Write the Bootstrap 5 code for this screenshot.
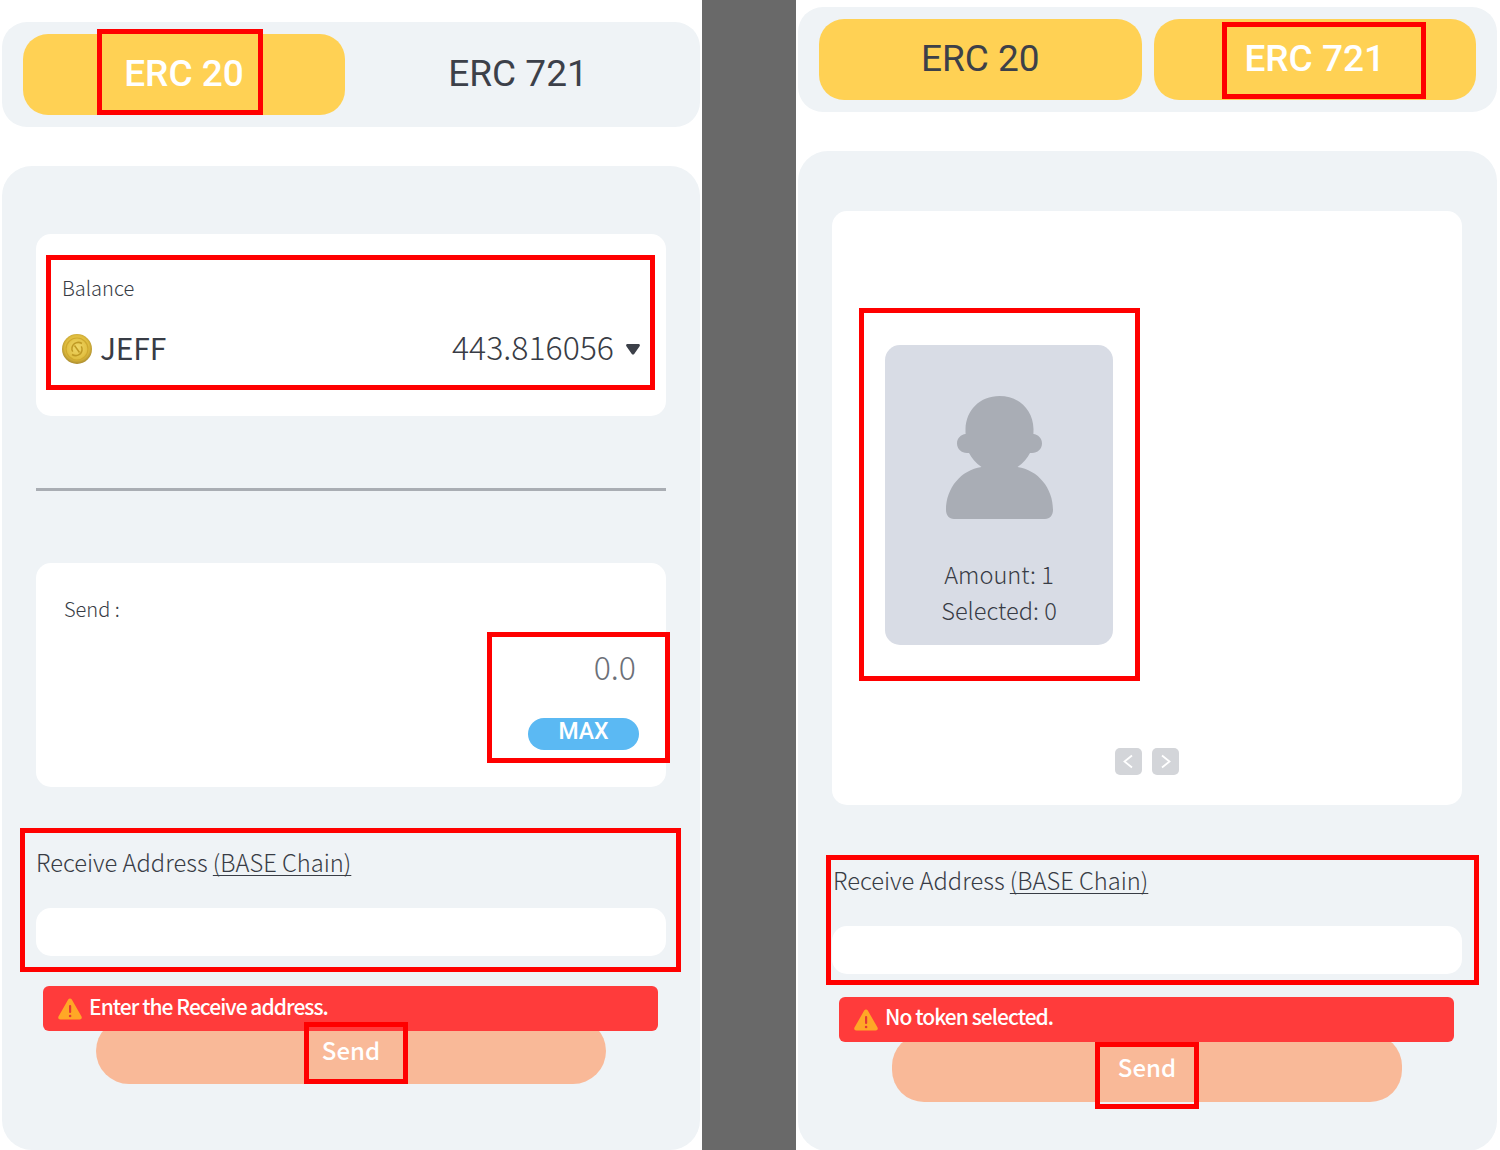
<!DOCTYPE html>
<html lang="en">
<head>
<meta charset="utf-8">
<title>Send tokens</title>
<link href="https://cdn.jsdelivr.net/npm/bootstrap@5.3.0/dist/css/bootstrap.min.css" rel="stylesheet">
<style>
html,body{height:1150px;overflow:hidden;background:#fff}
body{font-family:"Noto Sans CJK KR","Noto Sans",sans-serif;font-weight:300;color:#383c45;position:relative}
.stage{height:1150px;width:1500px}
.pane-l{width:702px;padding:22px 0 0 2px;flex:none}
.pane-gap{width:94px;background:#696969;flex:none}
.pane-r{width:704px;padding:7px 3px 0 2px;flex:none}
.tabbar{height:105px;background:#eff3f6;border-radius:25px;padding:12px 21px;margin-right:2px;gap:12px}
.tabbar-r{margin-right:0}
.tabitem{flex:1 1 0;height:81px;border-radius:25px;font-size:37px;font-weight:400;line-height:80px;text-align:center;color:#3c4049;font-family:"Roboto","Noto Sans",sans-serif}
.tabitem.on{background:#ffd154}
.tabitem.lit{color:#fff;font-weight:500}
.panel{background:#eff3f6;border-radius:30px;margin-top:39px;padding:68px 34px 0;height:984px;margin-right:2px}
.panel-r{height:1000px;padding:60px 35px 0 34px;margin-right:0}
.whitebox{background:#fff;border-radius:15px}
.bal{height:182px;padding:41px 26px 0}
.bal-lab{font-size:20px;line-height:26px}
.bal-row{margin-top:32px;height:32px}
.coin{width:30px;height:30px;flex:none}
.sym{font-size:30px;line-height:30px;font-weight:400;margin:0 0 4px 8px;letter-spacing:-.2px}
.amt{font-size:32px;line-height:30px;margin:0 12px 6px 0}
.caret-s{width:14px;height:11px;flex:none}
.rule{height:3px;background:#a9adb3;margin:72px 0}
.sendbox{height:224px;padding:33px 27px 0 28px}
.send-lab{font-size:20px;line-height:26px}
.zero{font-size:32px;line-height:36px;color:#6c7078;text-align:right;margin-top:26px;padding-right:3px}
.maxpill{width:111px;height:32px;background:#5bb9f3;border-radius:16px;color:#fff;font-size:23px;font-weight:500;line-height:28px;text-align:center;margin-top:34px;font-family:"Roboto",sans-serif}
.recv{font-size:23.700px;line-height:32px;margin:59px 0 0}
.recv u{text-underline-offset:3px;text-decoration-thickness:1px;text-decoration-skip-ink:none}
.addr{height:48px;background:#fff;border-radius:15px;margin-top:30px}
.warn{height:45px;margin:30px 8px 0 7px;background:#ff3b3b;border-radius:6px;color:#fff;font-size:21px;font-weight:500;padding-left:15px;position:relative;z-index:2;letter-spacing:-.95px}
.warn svg{width:24px;height:22px;margin-right:7px;flex:none}
.warn span{padding-bottom:4px}
.sendbtn{width:510px;height:66px;margin:-13px auto 0;background:#f9b998;border-radius:33px;color:#fff;font-size:24px;font-weight:500;line-height:64px;text-align:center}
.nftbox{height:594px;padding:134px 53px 0}
.tile{width:228px;height:300px;background:#d8dce5;border-radius:15px;padding-top:51px;text-align:center;font-size:23.600px;line-height:36px}
.tile svg{width:107px;height:123px;display:block;margin:0 auto 37px}
.pager{gap:10px;margin-top:103px;padding-left:230px}
.pg{width:27px;height:27px;background:#d3d5d9;border-radius:5px}
.pg svg{width:27px;height:27px;display:block}
.recv-r{margin-top:59px;margin-left:1px}
.warn-r{margin-top:23px}
.warn-r span{padding-bottom:6px}
.sendbtn-r{height:68px;margin-top:-8px;line-height:66px;border-radius:32px}
.mark-box{position:absolute;border:5px solid #f00;z-index:5;pointer-events:none}
.m1{left:97px;top:29px;width:166px;height:86px}
.m2{left:46px;top:255px;width:609px;height:135px}
.m3{left:487px;top:632px;width:183px;height:131px}
.m4{left:20px;top:828px;width:661px;height:144px}
.m5{left:304px;top:1022px;width:104px;height:62px}
.m6{left:1222px;top:22px;width:204px;height:77px}
.m7{left:859px;top:308px;width:281px;height:373px}
.m8{left:826px;top:855px;width:653px;height:130px}
.m9{left:1095px;top:1042px;width:104px;height:67px}
</style>
</head>
<body>
<div class="stage d-flex">
  <div class="pane-l">
    <div class="tabbar d-flex">
      <div class="tabitem on lit">ERC 20</div>
      <div class="tabitem">ERC 721</div>
    </div>
    <div class="panel">
      <div class="whitebox bal">
        <div class="bal-lab">Balance</div>
        <div class="bal-row d-flex align-items-center">
          <svg class="coin" viewBox="0 0 30 30"><defs><radialGradient id="cg" cx="50%" cy="45%" r="55%"><stop offset="0" stop-color="#f0d868"/><stop offset=".72" stop-color="#e0bd3e"/><stop offset="1" stop-color="#a98a2e"/></radialGradient></defs><circle cx="15" cy="15" r="15" fill="url(#cg)"/><circle cx="15" cy="15" r="11" fill="none" stroke="#cfa92f" stroke-width="1.200"/><path d="M20 9.500c-4-2.500-9-.5-10 4-.3 1.500 0 3 .7 4.200M10 20.500c4 2.500 9 .5 10-4 .3-1.500 0-3-.7-4.200M12.500 11.500l5 7" fill="none" stroke="#c09a24" stroke-width="1.500"/></svg>
          <span class="sym">JEFF</span>
          <span class="amt ms-auto">443.816056</span>
          <svg class="caret-s" viewBox="0 0 14 11"><path d="M1.500 0h11c1.200 0 1.800 1.200 1.100 2.200L8.200 10c-.6.8-1.800.8-2.400 0L.4 2.200C-.3 1.200.3 0 1.500 0z" fill="#3c4049"/></svg>
        </div>
      </div>
      <div class="rule"></div>
      <div class="whitebox sendbox">
        <div class="send-lab">Send :</div>
        <div class="zero">0.0</div>
        <div class="maxpill ms-auto">MAX</div>
      </div>
      <div class="recv">Receive Address <u>(BASE Chain)</u></div>
      <div class="addr"></div>
      <div class="warn d-flex align-items-center">
        <svg viewBox="0 0 24 22"><path d="M10.200 1.500c.8-1.400 2.800-1.400 3.600 0l9.700 17c.8 1.400-.2 3-1.800 3H2.300c-1.600 0-2.600-1.600-1.800-3z" fill="#ffa726"/><rect x="11" y="7" width="2.200" height="8" rx="1" fill="#e53935"/><circle cx="12.100" cy="18" r="1.300" fill="#e53935"/></svg>
        <span>Enter the Receive address.</span>
      </div>
      <div class="sendbtn">Send</div>
    </div>
  </div>
  <div class="pane-gap"></div>
  <div class="pane-r">
    <div class="tabbar tabbar-r d-flex">
      <div class="tabitem on">ERC 20</div>
      <div class="tabitem on lit">ERC 721</div>
    </div>
    <div class="panel panel-r">
      <div class="whitebox nftbox">
        <div class="tile">
          <svg viewBox="0 0 107 123"><path d="M53.500 0C34 0 20 14 19.500 33c0 1 0 3 .1 5C15 38.500 11 42 11 47.500c0 5.500 4.500 9.500 10 9.500h2c2.500 5 7 10.500 12.500 14C15 74 0 92 0 114c0 5 3 9 8 9h91c5 0 8-4 8-9 0-22-15-40-35.500-43 5.500-3.500 10-9 12.500-14h2c5.500 0 10-4 10-9.500 0-5.500-4-9-8.600-9.500.1-2 .1-4 .1-5C87 14 73 0 53.500 0z" fill="#a9adb5"/></svg>
          <div>Amount: 1</div>
          <div>Selected: 0</div>
        </div>
        <div class="pager d-flex">
          <div class="pg"><svg viewBox="0 0 27 27"><path d="M17 7.500l-7.500 6 7.500 6" fill="none" stroke="#fff" stroke-width="1.800"/></svg></div>
          <div class="pg"><svg viewBox="0 0 27 27"><path d="M10 7.500l7.500 6-7.500 6" fill="none" stroke="#fff" stroke-width="1.800"/></svg></div>
        </div>
      </div>
      <div class="recv recv-r">Receive Address <u>(BASE Chain)</u></div>
      <div class="addr"></div>
      <div class="warn warn-r d-flex align-items-center">
        <svg viewBox="0 0 24 22"><path d="M10.200 1.500c.8-1.400 2.800-1.400 3.600 0l9.700 17c.8 1.400-.2 3-1.800 3H2.300c-1.600 0-2.600-1.600-1.800-3z" fill="#ffa726"/><rect x="11" y="7" width="2.200" height="8" rx="1" fill="#e53935"/><circle cx="12.100" cy="18" r="1.300" fill="#e53935"/></svg>
        <span>No token selected.</span>
      </div>
      <div class="sendbtn sendbtn-r">Send</div>
    </div>
  </div>
</div>
<div class="mark-box m1"></div><div class="mark-box m2"></div><div class="mark-box m3"></div><div class="mark-box m4"></div><div class="mark-box m5"></div><div class="mark-box m6"></div><div class="mark-box m7"></div><div class="mark-box m8"></div><div class="mark-box m9"></div>
<script src="https://cdn.jsdelivr.net/npm/bootstrap@5.3.0/dist/js/bootstrap.bundle.min.js"></script>
</body>
</html>
